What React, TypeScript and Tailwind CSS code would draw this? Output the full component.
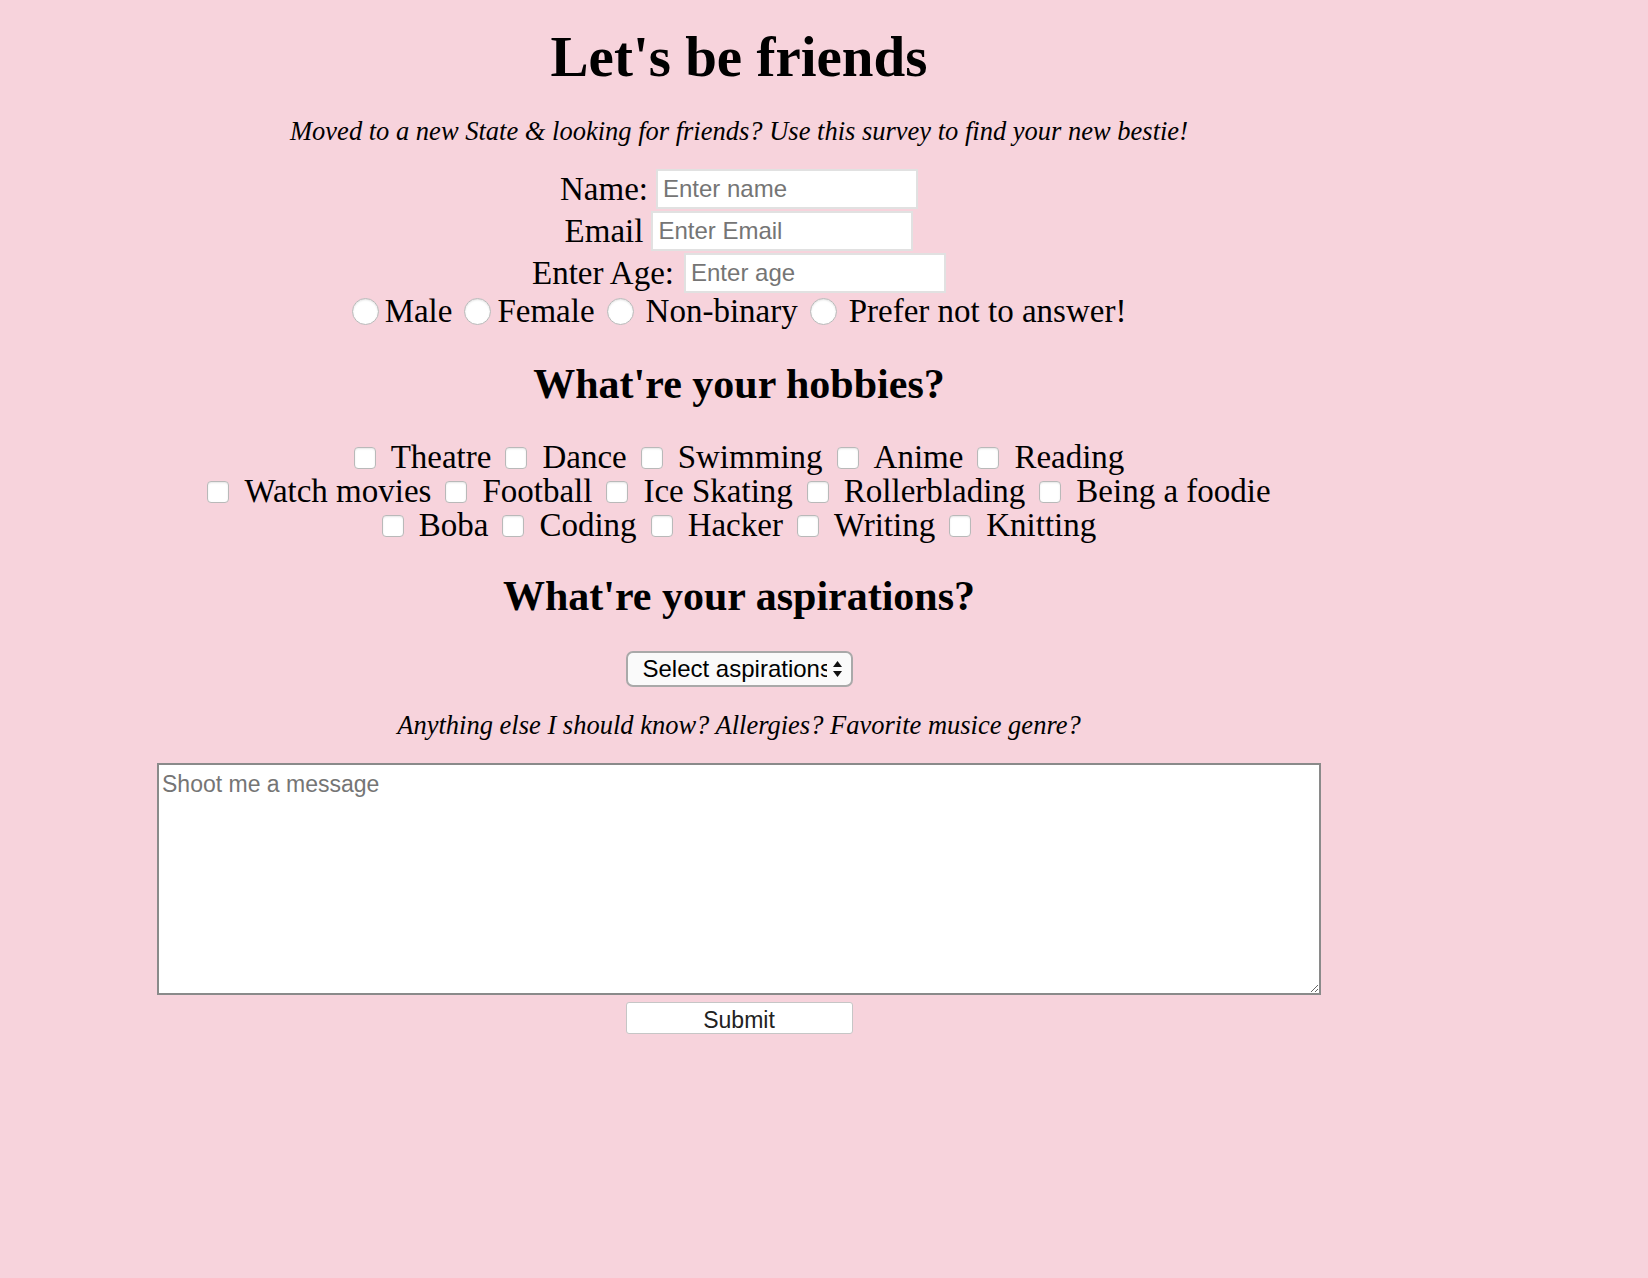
import { useState } from "react";

const hobbies = [
  ["Theatre", "Dance", "Swimming", "Anime", "Reading"],
  ["Watch movies", "Football", "Ice Skating", "Rollerblading", "Being a foodie"],
  ["Boba", "Coding", "Hacker", "Writing", "Knitting"],
];

const genders = ["Male", "Female", "Non-binary", "Prefer not to answer!"];

const inputCls =
  "w-[262px] h-[40px] px-[5px] bg-white border-2 border-[#e1e1e1] text-[24px] font-['Liberation_Sans',sans-serif] placeholder:text-[#757575] outline-none";

const App = () => {
  const [gender, setGender] = useState("");

  return (
    <div className="min-h-screen bg-[#f7d3dc] font-['Liberation_Serif',serif] text-black">
      <form className="w-[1478px] flex flex-col items-center">
        <h1 className="mt-[24px] h-[66px] text-[57px] leading-[66px] font-bold">Let's be friends</h1>

        <p className="mt-[26px] text-[26.5px] leading-[30px] italic">
          Moved to a new State &amp; looking for friends? Use this survey to find your new bestie!
        </p>

        <div className="mt-[23px] flex flex-col items-center gap-[2px]">
          <label className="flex items-center gap-[8px] text-[33px] leading-[40px]">
            Name:
            <input className={inputCls} placeholder="Enter name" />
          </label>
          <label className="flex items-center gap-[8px] text-[33px] leading-[40px]">
            Email
            <input className={inputCls} placeholder="Enter Email" />
          </label>
          <label className="flex items-center gap-[10px] text-[33px] leading-[40px]">
            Enter Age:
            <input className={inputCls} placeholder="Enter age" />
          </label>
        </div>

        <div className="mt-[1px] flex items-center text-[33px] leading-[34px]">
          {genders.map((g, i) => (
            <label key={g} className={`flex items-center ${i > 0 ? "ml-[12px]" : ""}`}>
              <input
                type="radio"
                name="gender"
                checked={gender === g}
                onChange={() => setGender(g)}
                className="appearance-none w-[27px] h-[27px] rounded-full bg-white border border-[#b9b9b9] shadow-[inset_0_1px_2px_rgba(0,0,0,0.12)]"
              />
              <span className={i > 1 ? "ml-[12px]" : "ml-[6px]"}>{g}</span>
            </label>
          ))}
        </div>

        <h2 className="mt-[34px] text-[42px] leading-[44px] font-bold">What're your hobbies?</h2>

        <div className="mt-[34px] flex flex-col items-center text-[33px] leading-[34px]">
          {hobbies.map((row, r) => (
            <div key={r} className="flex items-center gap-[14px]">
              {row.map((h) => (
                <label key={h} className="flex items-center gap-[15px]">
                  <input
                    type="checkbox"
                    className="appearance-none mt-[2px] w-[22px] h-[22px] rounded-[4px] bg-white border border-[#b9b9b9] shadow-[inset_0_1px_2px_rgba(0,0,0,0.1)]"
                  />
                  {h}
                </label>
              ))}
            </div>
          ))}
        </div>

        <h2 className="mt-[32px] text-[42px] leading-[44px] font-bold">What're your aspirations?</h2>

        <div className="mt-[33px] relative w-[227px] h-[36px] bg-[#fafafa] border-2 border-[#a9a9a9] rounded-[7px] flex items-center pl-[15px] font-['Liberation_Sans',sans-serif] text-[24px]">
          <span className="w-[184px] overflow-hidden whitespace-nowrap">Select aspirations</span>
          <svg className="absolute right-[8px] top-[7px]" width="11" height="18" viewBox="0 0 11 18">
            <path d="M5.5 1 L10 7 L1 7 Z" fill="#111" />
            <path d="M5.5 17 L10 11 L1 11 Z" fill="#111" />
          </svg>
        </div>

        <p className="mt-[23px] text-[26.5px] leading-[30px] italic">
          Anything else I should know? Allergies? Favorite musice genre?
        </p>

        <textarea
          placeholder="Shoot me a message"
          className="mt-[23px] w-[1164px] h-[232px] bg-white border-2 border-[#8a8a8a] px-[3px] py-[2px] text-[23px] font-['Liberation_Sans',sans-serif] placeholder:text-[#757575] outline-none"
        />

        <button
          type="button"
          className="mt-[7px] w-[227px] h-[32px] bg-white border border-[#c6c6c6] rounded-[3px] text-[23px] text-[#222] font-['Liberation_Sans',sans-serif]"
        >
          Submit
        </button>
      </form>
    </div>
  );
};

export default App;
